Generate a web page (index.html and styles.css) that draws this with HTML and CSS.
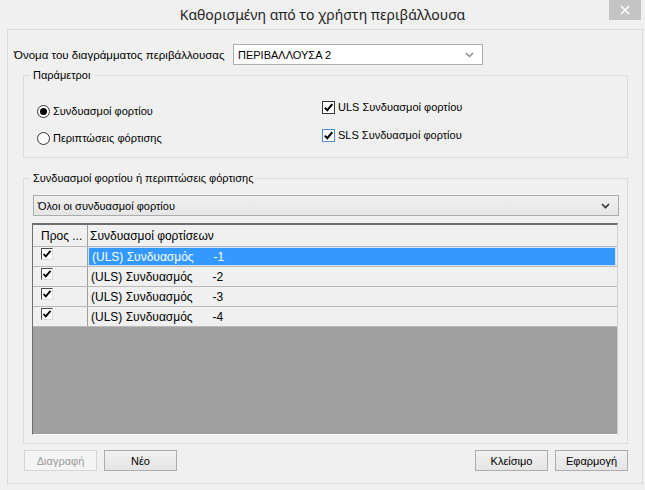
FILE: index.html
```html
<!DOCTYPE html>
<html lang="el">
<head>
<meta charset="utf-8">
<title>Καθορισμένη από το χρήστη περιβάλλουσα</title>
<link rel="stylesheet" href="styles.css">
</head>
<body>
<div class="window">
  <header class="titlebar">
    <span class="title">Καθορισμένη από το χρήστη περιβάλλουσα</span>
    <button class="close" aria-label="Κλείσιμο"><svg width="10" height="10" viewBox="0 0 10 10"><path d="M1 1 L9 9 M9 1 L1 9" stroke="#fff" stroke-width="1.6" fill="none"/></svg></button>
  </header>
  <main class="client">
    <div class="name-row">
      <label class="name-label">Όνομα του διαγράμματος περιβάλλουσας</label>
      <div class="combo combo-edit">
        <span class="combo-text">ΠΕΡΙΒΑΛΛΟΥΣΑ 2</span>
        <svg class="arrow" width="9" height="6" viewBox="0 0 9 6"><path d="M1 1 L4.5 4.5 L8 1" stroke="#8a8a8a" stroke-width="1.5" fill="none"/></svg>
      </div>
    </div>

    <fieldset class="group group-params">
      <legend>Παράμετροι</legend>
      <div class="params">
        <div class="col col-left">
          <div class="opt"><span class="radio checked"></span>Συνδυασμοί φορτίου</div>
          <div class="opt"><span class="radio"></span>Περιπτώσεις φόρτισης</div>
        </div>
        <div class="col col-right">
          <div class="opt"><span class="check"><svg width="11" height="11" viewBox="0 0 11 11"><path d="M1.8 5.6 L4.3 8.2 L9.3 2.2" stroke="#000" stroke-width="2" fill="none"/></svg></span>ULS Συνδυασμοί φορτίου</div>
          <div class="opt"><span class="check focus"><svg width="11" height="11" viewBox="0 0 11 11"><path d="M1.8 5.6 L4.3 8.2 L9.3 2.2" stroke="#000" stroke-width="2" fill="none"/></svg></span>SLS Συνδυασμοί φορτίου</div>
        </div>
      </div>
    </fieldset>

    <fieldset class="group group-list">
      <legend>Συνδυασμοί φορτίου ή περιπτώσεις φόρτισης</legend>
      <div class="list-body">
        <div class="combo combo-drop">
          <span class="combo-text">Όλοι οι συνδυασμοί φορτίου</span>
          <svg class="arrow" width="9" height="6" viewBox="0 0 9 6"><path d="M1 1 L4.5 4.5 L8 1" stroke="#333" stroke-width="1.6" fill="none"/></svg>
        </div>
        <div class="grid">
          <div class="grid-row grid-head">
            <div class="c1">Προς ...</div>
            <div class="c2">Συνδυασμοί φορτίσεων</div>
          </div>
          <div class="grid-row">
            <div class="c1"><span class="gcheck"><svg width="10" height="10" viewBox="0 0 10 10"><path d="M1.5 5 L3.8 7.4 L8.5 1.8" stroke="#000" stroke-width="1.8" fill="none"/></svg></span></div>
            <div class="c2 selected">(ULS) Συνδυασμός      -1</div>
          </div>
          <div class="grid-row">
            <div class="c1"><span class="gcheck"><svg width="10" height="10" viewBox="0 0 10 10"><path d="M1.5 5 L3.8 7.4 L8.5 1.8" stroke="#000" stroke-width="1.8" fill="none"/></svg></span></div>
            <div class="c2">(ULS) Συνδυασμός      -2</div>
          </div>
          <div class="grid-row">
            <div class="c1"><span class="gcheck"><svg width="10" height="10" viewBox="0 0 10 10"><path d="M1.5 5 L3.8 7.4 L8.5 1.8" stroke="#000" stroke-width="1.8" fill="none"/></svg></span></div>
            <div class="c2">(ULS) Συνδυασμός      -3</div>
          </div>
          <div class="grid-row">
            <div class="c1"><span class="gcheck"><svg width="10" height="10" viewBox="0 0 10 10"><path d="M1.5 5 L3.8 7.4 L8.5 1.8" stroke="#000" stroke-width="1.8" fill="none"/></svg></span></div>
            <div class="c2">(ULS) Συνδυασμός      -4</div>
          </div>
          <div class="grid-empty"></div>
        </div>
      </div>
    </fieldset>

    <div class="buttons">
      <button class="btn" disabled>Διαγραφή</button>
      <button class="btn">Νέο</button>
      <span class="spacer"></span>
      <button class="btn">Κλείσιμο</button>
      <button class="btn">Εφαρμογή</button>
    </div>
  </main>
</div>
</body>
</html>
```

FILE: styles.css
```css
* { box-sizing: border-box; }
html, body { margin: 0; padding: 0; }
body {
  width: 645px;
  height: 490px;
  overflow: hidden;
  background: #f0f0f0;
  font-family: "Liberation Sans", Arial, sans-serif;
  font-size: 11px;
  color: #000;
}
.window { width: 645px; height: 490px; display: flex; flex-direction: column; }

.titlebar {
  position: relative;
  height: 29px;
  flex: none;
  display: flex;
  align-items: center;
  justify-content: center;
}
.title {
  font-family: "Noto Sans", "DejaVu Sans", sans-serif;
  font-size: 14px;
  color: #1e1e1e;
}
.close {
  position: absolute;
  top: 0;
  right: 4px;
  width: 32px;
  height: 20px;
  padding: 0;
  border: 0;
  background: #c4c4c4;
  display: flex;
  align-items: center;
  justify-content: center;
}

.client {
  margin: 0 2px 0 7px;
  height: 455px;
  border: 1px solid #dadada;
  display: flex;
  flex-direction: column;
  padding: 14px 0 0 6px;
}

.name-row { display: flex; align-items: center; height: 21px; flex: none; }
.name-label { width: 219px; white-space: nowrap; font-size: 11.5px; }
.combo {
  display: flex;
  align-items: center;
  height: 21px;
  border: 1px solid #abadb3;
}
.combo-text { flex: 1; white-space: nowrap; }
.combo-edit { width: 250px; background: #fff; padding: 0 8px 0 4px; }
.combo-drop {
  width: 586px;
  margin-left: 1px;
  border-color: #acacac;
  background: linear-gradient(#f0f0f0, #e5e5e5);
  padding: 0 8px 0 4px;
}

.group {
  margin: 2px 0 0 9px;
  width: 605px;
  padding: 0;
  border: 1px solid #dcdcdc;
  min-width: 0;
  flex: none;
}
.group legend {
  margin-left: 6px;
  padding: 0 3px;
  line-height: 16px;
  font-size: 11px;
}
.group-list { margin-top: 12px; }

.params { display: flex; height: 74px; }
.col { display: flex; flex-direction: column; }
.col-left { width: 298px; padding: 18px 0 0 13px; gap: 7px; }
.col-right { padding-top: 14px; gap: 8px; }
.opt { display: flex; align-items: center; height: 20px; white-space: nowrap; }

.radio {
  width: 13px;
  height: 13px;
  border: 1px solid #333;
  border-radius: 50%;
  background: #fff;
  margin-right: 3px;
  display: flex;
  align-items: center;
  justify-content: center;
}
.radio.checked::after {
  content: "";
  width: 7px;
  height: 7px;
  border-radius: 50%;
  background: #000;
}
.check {
  width: 13px;
  height: 13px;
  border: 1px solid #333;
  background: #fff;
  margin-right: 3px;
  display: flex;
  align-items: center;
  justify-content: center;
}
.check.focus { border-color: #4a90d9; }

.list-body { padding: 9px 9px 8px 8px; display: flex; flex-direction: column; gap: 7px; }

.grid {
  width: 586px;
  height: 212px;
  display: flex;
  flex-direction: column;
  border-top: 2px solid #6e6e6e;
  border-left: 1px solid #6e6e6e;
  border-right: 1px solid #d0d0d0;
  border-bottom: 1px solid #fdfdfd;
  font-family: "Liberation Sans", Arial, sans-serif;
  font-size: 12px;
}
.grid-row { display: flex; height: 20px; border-bottom: 1px solid #b9b9b9; flex: none; }
.grid-head { height: 22px; }
.grid-row .c1 {
  width: 55px;
  border-right: 1px solid #a0a0a0;
  padding: 1px 0 0 8px;
  flex: none;
}
.grid-row .c2 {
  flex: 1;
  padding-left: 3px;
  white-space: pre;
  display: flex;
  align-items: center;
}
.grid-head .c1, .grid-head .c2 { display: flex; align-items: center; padding-top: 0; }
.grid-head .c2 { padding-left: 2px; }
.grid-row .c2.selected {
  background: #3399ff;
  color: #fff;
  border: 1px solid #cfe5ff;
  margin-right: 1px;
}
.gcheck {
  width: 12px;
  height: 12px;
  display: flex;
  align-items: center;
  justify-content: center;
  background: #fff;
  border: 1px solid;
  border-color: #4a4a4a #dcdcdc #dcdcdc #4a4a4a;
}
.grid-empty { flex: 1; background: #a0a0a0; }

.buttons {
  display: flex;
  gap: 7px;
  height: 21px;
  margin-top: 6px;
  padding: 0 14px 0 10px;
  flex: none;
}
.spacer { flex: 1; }
.btn {
  width: 73px;
  height: 21px;
  padding: 0;
  font-family: inherit;
  font-size: 11px;
  color: #000;
  border: 1px solid #acacac;
  background: linear-gradient(#f0f0f0, #e5e5e5);
}
.btn:disabled { color: #9a9a9a; border-color: #d5d5d5; background: #f4f4f4; }
```
